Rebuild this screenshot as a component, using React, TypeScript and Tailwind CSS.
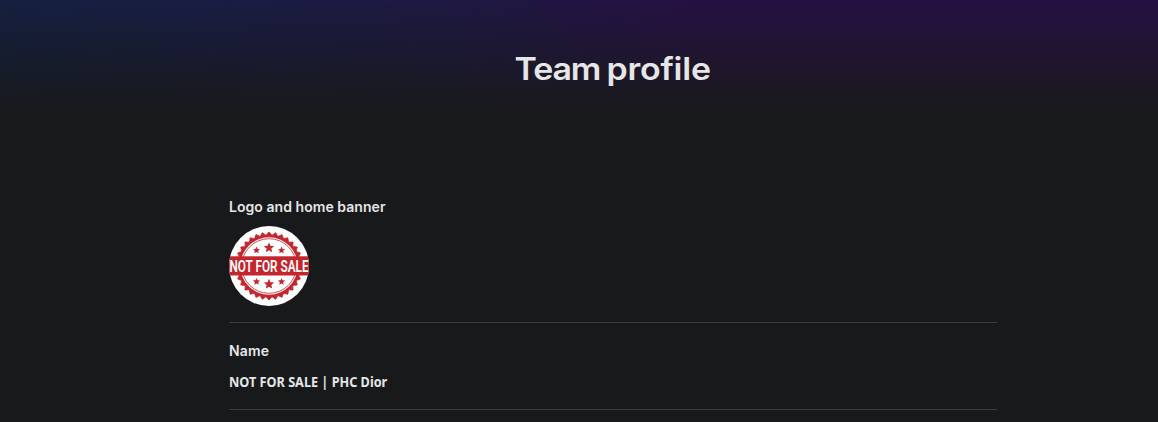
import React from 'react';

const STARS = [
  { x: 27.5, y: 24.3, r: 3.8 },
  { x: 40, y: 21.8, r: 5.4 },
  { x: 52.5, y: 24.3, r: 3.8 },
  { x: 27.5, y: 55.7, r: 3.8 },
  { x: 40, y: 58.2, r: 5.4 },
  { x: 52.5, y: 55.7, r: 3.8 },
];

function starPoints(cx: number, cy: number, outer: number, inner: number, tips: number) {
  return Array.from({ length: tips * 2 }, (_, i) => {
    const radius = i % 2 === 0 ? outer : inner;
    const angle = (Math.PI * i) / tips - Math.PI / 2;
    return `${(cx + radius * Math.cos(angle)).toFixed(2)},${(cy + radius * Math.sin(angle)).toFixed(2)}`;
  }).join(' ');
}

function TeamLogo() {
  return (
    <svg viewBox="0 0 80 80" className="h-20 w-20 rounded-full bg-white">
      <polygon
        points={starPoints(40, 40, 34, 30.8, 32)}
        fill="#c4262e"
        stroke="#c4262e"
        strokeWidth="0.8"
        strokeLinejoin="round"
      />
      <circle cx="40" cy="40" r="28.7" fill="#fff" />
      <circle cx="40" cy="40" r="27.3" fill="none" stroke="#c4262e" strokeWidth="0.8" />
      {STARS.map((star) => (
        <polygon
          key={`${star.x}-${star.y}`}
          points={starPoints(star.x, star.y, star.r, star.r * 0.46, 5)}
          fill="#c4262e"
        />
      ))}
      <rect y="30.3" width="80" height="19.2" fill="#c4262e" />
      <text
        transform="translate(40 46) scale(0.66 1)"
        textAnchor="middle"
        textLength="120"
        lengthAdjust="spacingAndGlyphs"
        fill="#fff"
        className="font-['Roboto',sans-serif] text-[17px] font-semibold"
      >
        NOT FOR SALE
      </text>
    </svg>
  );
}

export default function App() {
  return (
    <div className="relative min-h-screen bg-[#18191b] font-['Inter',sans-serif] text-[#e6e6e7]">
      <div className="absolute inset-x-0 top-0 h-28 bg-[linear-gradient(to_bottom,rgba(24,25,27,0)_0%,rgba(24,25,27,0.18)_20%,#18191b_100%),linear-gradient(to_right,#14203f_0%,#191c43_20%,#1e1843_40%,#261142_60%,#261142_100%)]" />
      <header className="relative flex h-[137px] justify-center pt-12 pl-[68px]">
        <h1 className="scale-x-[1.095] text-[31px] leading-[41px] font-semibold tracking-[-0.2px] whitespace-nowrap [word-spacing:-2px]">
          <span className="tracking-[-1px]">Team</span> profile
        </h1>
      </header>
      <main className="relative ml-[229px] w-[768px] pt-[59px]">
        <section className="flex h-[127px] flex-col gap-2 border-b border-[#3b3c3e]">
          <h2 className="text-sm leading-[22px] font-semibold tracking-[0.05px]">Logo and home banner</h2>
          <TeamLogo />
        </section>
        <section className="flex h-[87px] flex-col gap-[9px] border-b border-[#3b3c3e] pt-[17px]">
          <h2 className="text-sm leading-[22px] font-semibold tracking-[0.2px]">Name</h2>
          <p className="origin-left scale-x-[0.905] font-['Noto_Sans',sans-serif] text-sm leading-[22px] font-bold">
            NOT FOR SALE | PHC Dior
          </p>
        </section>
      </main>
    </div>
  );
}
